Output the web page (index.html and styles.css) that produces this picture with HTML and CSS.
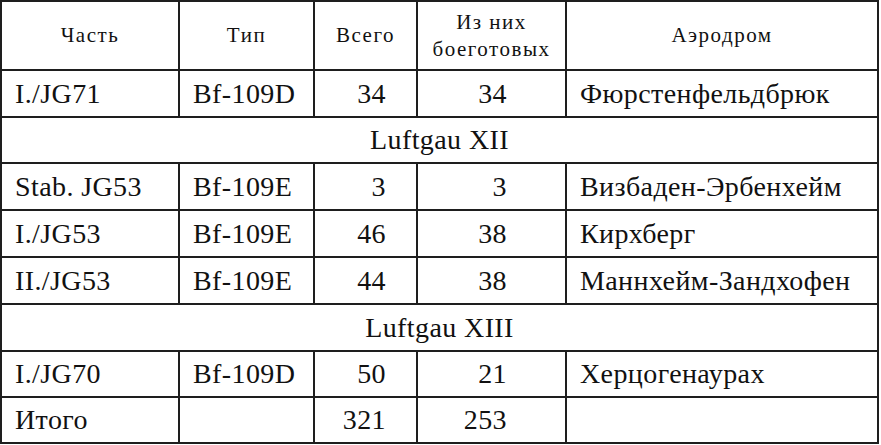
FILE: index.html
```html
<!DOCTYPE html>
<html lang="ru">
<head>
<meta charset="utf-8">
<link rel="stylesheet" href="styles.css">
</head>
<body>
<div class="tbl">
  <div class="c h">Часть</div>
  <div class="c h">Тип</div>
  <div class="c h">Всего</div>
  <div class="c h">Из них<br>боеготовых</div>
  <div class="c h">Аэродром</div>

  <div class="c">I./JG71</div>
  <div class="c">Bf-109D</div>
  <div class="c n n1">34</div>
  <div class="c n n2">34</div>
  <div class="c">Фюрстенфельдбрюк</div>

  <div class="c span">Luftgau XII</div>

  <div class="c">Stab. JG53</div>
  <div class="c">Bf-109E</div>
  <div class="c n n1">3</div>
  <div class="c n n2">3</div>
  <div class="c">Визбаден-Эрбенхейм</div>

  <div class="c">I./JG53</div>
  <div class="c">Bf-109E</div>
  <div class="c n n1">46</div>
  <div class="c n n2">38</div>
  <div class="c">Кирхберг</div>

  <div class="c">II./JG53</div>
  <div class="c">Bf-109E</div>
  <div class="c n n1">44</div>
  <div class="c n n2">38</div>
  <div class="c">Маннхейм-Зандхофен</div>

  <div class="c span">Luftgau XIII</div>

  <div class="c">I./JG70</div>
  <div class="c">Bf-109D</div>
  <div class="c n n1">50</div>
  <div class="c n n2">21</div>
  <div class="c">Херцогенаурах</div>

  <div class="c">Итого</div>
  <div class="c"></div>
  <div class="c n n1">321</div>
  <div class="c n n2">253</div>
  <div class="c"></div>
</div>
</body>
</html>
```
FILE: styles.css
```css
html, body {
  margin: 0;
  padding: 0;
  background: #fff;
}
.tbl {
  display: grid;
  grid-template-columns: 178px 135px 103px 149px 312px;
  grid-template-rows: 69px 47px 46px 47px 47px 47px 47px 46px 46px;
  width: max-content;
  border-left: 2px solid #1e1e1e;
  border-top: 2px solid #1e1e1e;
  font-family: "Liberation Serif", "Times New Roman", serif;
  color: #111;
}
.c {
  box-sizing: border-box;
  border-right: 2px solid #1e1e1e;
  border-bottom: 2px solid #1e1e1e;
  display: flex;
  align-items: center;
  padding: 0 0 0 13px;
  font-size: 28px;
  letter-spacing: 0.4px;
  white-space: nowrap;
}
.h {
  justify-content: center;
  text-align: center;
  padding: 0;
  font-size: 21px;
  line-height: 27px;
  letter-spacing: 1.5px;
}
.n {
  justify-content: flex-end;
  padding: 0;
}
.n1 { padding-right: 30px; }
.n2 { padding-right: 58px; }
.span {
  grid-column: 1 / -1;
  justify-content: center;
  padding: 0;
}
```
